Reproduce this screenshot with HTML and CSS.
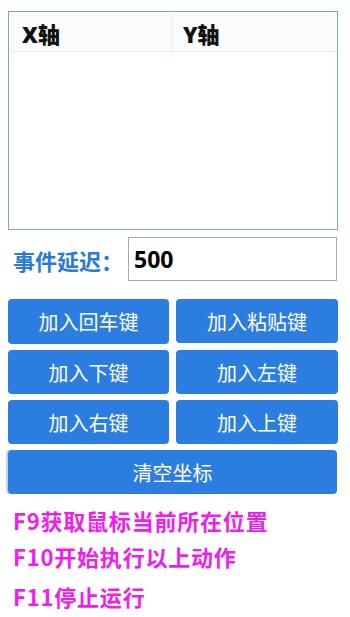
FILE: index.html
```html
<!DOCTYPE html>
<html lang="zh-CN">
<head>
<meta charset="utf-8">
<link rel="stylesheet" href="styles.css">
</head>
<body>
<div class="app">
  <div class="grid">
    <div class="grid-head">
      <div class="col">X轴</div>
      <div class="col">Y轴</div>
    </div>
  </div>
  <div class="delay-row">
    <span class="delay-label">事件延迟：</span>
    <div class="delay-input">500</div>
  </div>
  <div class="buttons">
    <button class="btn">加入回车键</button>
    <button class="btn">加入粘贴键</button>
    <button class="btn">加入下键</button>
    <button class="btn">加入左键</button>
    <button class="btn">加入右键</button>
    <button class="btn">加入上键</button>
    <button class="btn btn-wide">清空坐标</button>
  </div>
  <div class="tips">
    <div class="tip tip1">F9获取鼠标当前所在位置</div>
    <div class="tip tip2">F10开始执行以上动作</div>
    <div class="tip tip3">F11停止运行</div>
  </div>
</div>
</body>
</html>
```

FILE: styles.css
```css
html, body {
  margin: 0;
  padding: 0;
  background: #ffffff;
}
body {
  font-family: "Noto Sans", "Noto Sans CJK SC", sans-serif;
}
.app {
  width: 350px;
  height: 617px;
  padding-top: 11px;
  box-sizing: border-box;
}
.grid {
  margin-left: 8px;
  width: 330px;
  height: 219px;
  border: 1px solid #74a5dd;
  box-sizing: border-box;
  padding: 2px 2px 0 2px;
  background: #ffffff;
}
.grid-head {
  display: flex;
  height: 37px;
  border-bottom: 1px solid #e2e9f2;
  background: #fafbfd;
}
.col {
  box-sizing: border-box;
  padding-left: 11px;
  display: flex;
  align-items: center;
  font-weight: 900;
  font-size: 22px;
  color: #111111;
  font-family: "Noto Sans", "Noto Sans CJK SC", sans-serif;
}
.col:first-child {
  width: 161px;
  border-right: 1px solid #e6ecf3;
}
.col:last-child {
  flex: 1;
}
.delay-row {
  display: flex;
  align-items: center;
  margin-top: 7px;
  height: 44px;
}
.delay-label {
  margin-left: 13px;
  width: 115px;
  font-size: 22px;
  font-weight: bold;
  color: #2a7bd8;
  font-family: "Noto Sans CJK SC", sans-serif;
  line-height: 1;
  padding-top: 2px;
}
.delay-input {
  box-sizing: border-box;
  width: 209px;
  height: 44px;
  border: 1px solid #a8a8a8;
  padding-left: 5px;
  display: flex;
  align-items: center;
  font-size: 23px;
  font-weight: bold;
  color: #000000;
}
.buttons {
  margin: 18px 0 0 8px;
  width: 330px;
  display: grid;
  grid-template-columns: 161px 162px;
  column-gap: 7px;
  row-gap: 6px;
}
.btn {
  height: 44px;
  border: none;
  border-radius: 4px;
  background: #2b7de0;
  color: #ffffff;
  font-family: "Noto Sans CJK SC", sans-serif;
  font-size: 20px;
  padding: 0;
  margin: 0;
}
.btn:first-child {
  height: 45px;
}
.btn-wide {
  grid-column: 1 / 3;
  width: 329px;
  box-shadow: -2px 0 0 #b9d3f2;
}
.tips {
  margin-left: 13px;
  margin-top: 9px;
}
.tip {
  font-family: "Noto Sans CJK SC", sans-serif;
  font-size: 22px;
  font-weight: bold;
  color: #f01cf0;
  letter-spacing: 0.8px;
}
.tip1 {
  height: 34px;
  line-height: 34px;
}
.tip2 {
  height: 38px;
  line-height: 38px;
}
.tip3 {
  height: 42px;
  line-height: 42px;
}
```
